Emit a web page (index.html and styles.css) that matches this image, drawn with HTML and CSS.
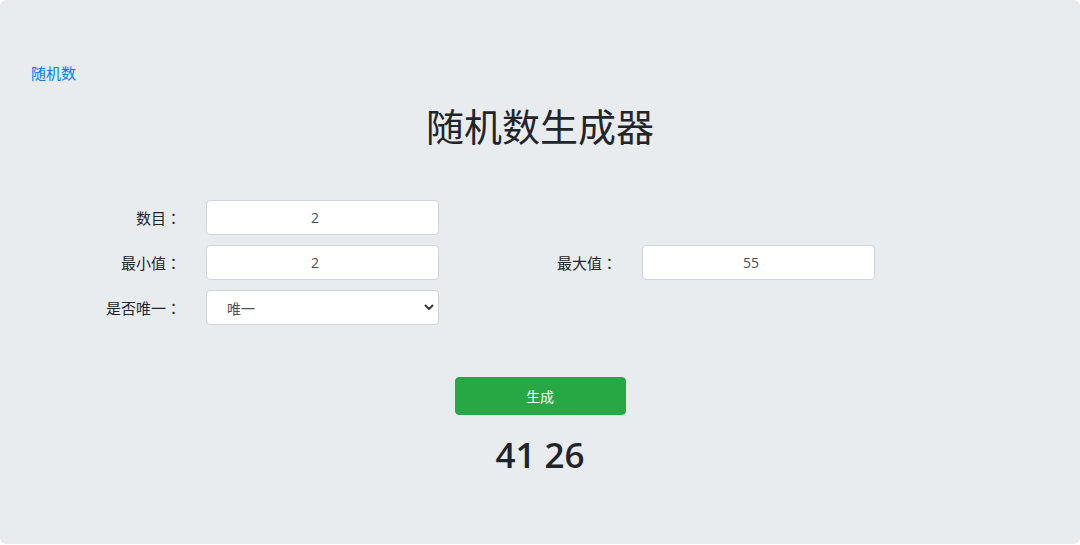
FILE: index.html
```html
<!DOCTYPE html>
<html lang="zh">
<head>
<meta charset="utf-8">
<title>随机数生成器</title>
<link rel="stylesheet" href="styles.css">
</head>
<body>
<div class="jumbo">
  <a class="crumb" href="#">随机数</a>
  <h1 class="title">随机数生成器</h1>
  <form class="form">
    <label class="lbl">数目<span class="colon">：</span></label>
    <input class="ctl" type="text" value="2">
    <span></span><span></span>
    <label class="lbl">最小值<span class="colon">：</span></label>
    <input class="ctl" type="text" value="2">
    <label class="lbl">最大值<span class="colon">：</span></label>
    <input class="ctl" type="text" value="55">
    <label class="lbl">是否唯一<span class="colon">：</span></label>
    <div class="sel-wrap">
      <select class="sel"><option>唯一</option><option>不唯一</option></select>
      <svg class="chev" width="10" height="7" viewBox="0 0 10 7"><path d="M1.5 1.5 L5 5 L8.5 1.5" fill="none" stroke="#343a40" stroke-width="2" stroke-linecap="round" stroke-linejoin="round"/></svg>
    </div>
  </form>
  <div class="actions">
    <button class="btn" type="button">生成</button>
  </div>
  <div class="result">41 26</div>
</div>
</body>
</html>
```
FILE: styles.css
```css
html, body {
  margin: 0;
  padding: 0;
  background: #ffffff;
}
body {
  font-family: "Open Sans", "Noto Sans CJK SC", sans-serif;
  color: #212529;
}
.jumbo {
  box-sizing: border-box;
  height: 544px;
  background: #e9ecef;
  border-radius: 6px;
  padding: 62px 0 0 0;
}
.crumb {
  display: block;
  margin-left: 31px;
  font-family: "Noto Sans CJK SC", sans-serif;
  font-size: 15px;
  line-height: 22px;
  color: #007bff;
  text-decoration: none;
}
.title {
  margin: 18px 0 0 0;
  text-align: center;
  font-family: "Noto Sans CJK SC", sans-serif;
  font-weight: 400;
  font-size: 38px;
  line-height: 46px;
  color: #212529;
}
.form {
  margin-top: 52px;
  display: grid;
  grid-template-columns: 181px 233px 153px 233px;
  grid-auto-rows: 35px;
  column-gap: 25px;
  row-gap: 10px;
}
.lbl {
  align-self: center;
  text-align: right;
  font-family: "Noto Sans CJK SC", sans-serif;
  font-size: 15px;
  line-height: 22px;
  color: #212529;
}
.colon {
  font-family: "Noto Sans CJK TC", sans-serif;
  display: inline-block;
  width: 15px;
  text-align: center;
  text-spacing-trim: space-all;
}
.ctl {
  box-sizing: border-box;
  width: 100%;
  height: 35px;
  margin: 0;
  padding: 0 27px 0 12px;
  border: 1px solid #ced4da;
  border-radius: 4px;
  background: #fff;
  text-align: center;
  font-family: "Open Sans", "Noto Sans CJK SC", sans-serif;
  font-size: 14px;
  color: #495057;
}
.sel-wrap {
  position: relative;
}
.sel {
  box-sizing: border-box;
  width: 100%;
  height: 35px;
  margin: 0;
  padding: 0 0 0 20px;
  border: 1px solid #ced4da;
  border-radius: 4px;
  background: #fff;
  appearance: none;
  -webkit-appearance: none;
  font-family: "Noto Sans CJK SC", sans-serif;
  font-size: 14px;
  color: #495057;
}
.chev {
  position: absolute;
  right: 5px;
  top: 14px;
  pointer-events: none;
}
.actions {
  margin-top: 52px;
  display: flex;
  justify-content: center;
}
.btn {
  width: 171px;
  height: 38px;
  border: 1px solid #28a745;
  border-radius: 4px;
  background: #28a745;
  color: #fff;
  font-family: "Noto Sans CJK SC", sans-serif;
  font-size: 14px;
  padding: 0;
}
.result {
  margin-top: 18px;
  text-align: center;
  font-family: "Open Sans", sans-serif;
  font-weight: 600;
  font-size: 35px;
  line-height: 44px;
  color: #212529;
}
```
